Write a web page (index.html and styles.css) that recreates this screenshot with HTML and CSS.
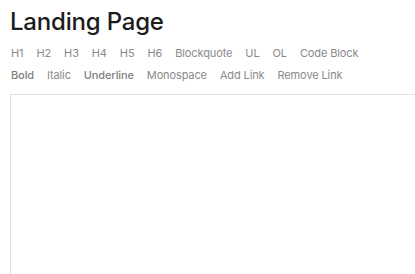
FILE: index.html
```html
<!DOCTYPE html>
<html lang="en">
<head>
    <meta charset="UTF-8">
    <meta name="viewport" content="width=device-width, initial-scale=1.0">
    <title>Landing Page</title>
    <link rel="stylesheet" href="styles.css">
</head>
<body>
    <div class="page">
        <h1 class="title">Landing Page</h1>
        <div class="toolbar">
            <button class="tool">H1</button>
            <button class="tool">H2</button>
            <button class="tool">H3</button>
            <button class="tool">H4</button>
            <button class="tool">H5</button>
            <button class="tool">H6</button>
            <button class="tool">Blockquote</button>
            <button class="tool">UL</button>
            <button class="tool">OL</button>
            <button class="tool">Code Block</button>
        </div>
        <div class="toolbar">
            <button class="tool tool-bold">Bold</button>
            <button class="tool">Italic</button>
            <button class="tool tool-underline">Underline</button>
            <button class="tool">Monospace</button>
            <button class="tool">Add Link</button>
            <button class="tool">Remove Link</button>
        </div>
        <div class="editor" contenteditable="true"></div>
    </div>
</body>
</html>
```

FILE: styles.css
```css
* {
    box-sizing: border-box;
    margin: 0;
    padding: 0;
}
body {
    font-family: 'Inter', 'Helvetica Neue', Arial, sans-serif;
    background: #fff;
    color: #1c1c1c;
    overflow: hidden;
}
.page {
    padding: 7px 0 0 10px;
}
.title {
    font-size: 24px;
    font-weight: 500;
    line-height: 30px;
    letter-spacing: -0.2px;
    margin-bottom: 5px;
}
.toolbar {
    display: flex;
    gap: 12px;
    height: 22px;
    align-items: center;
}
.tool {
    font-family: inherit;
    font-size: 11px;
    letter-spacing: -0.12px;
    color: #8a8a8a;
    background: none;
    border: none;
    padding: 0 0 0 1px;
    cursor: pointer;
}
.tool-bold,
.tool-underline {
    font-weight: 500;
    color: #7f7f7f;
}
.editor {
    margin-top: 8px;
    width: 420px;
    height: 200px;
    border: 1px solid #e2e2e2;
}
```
